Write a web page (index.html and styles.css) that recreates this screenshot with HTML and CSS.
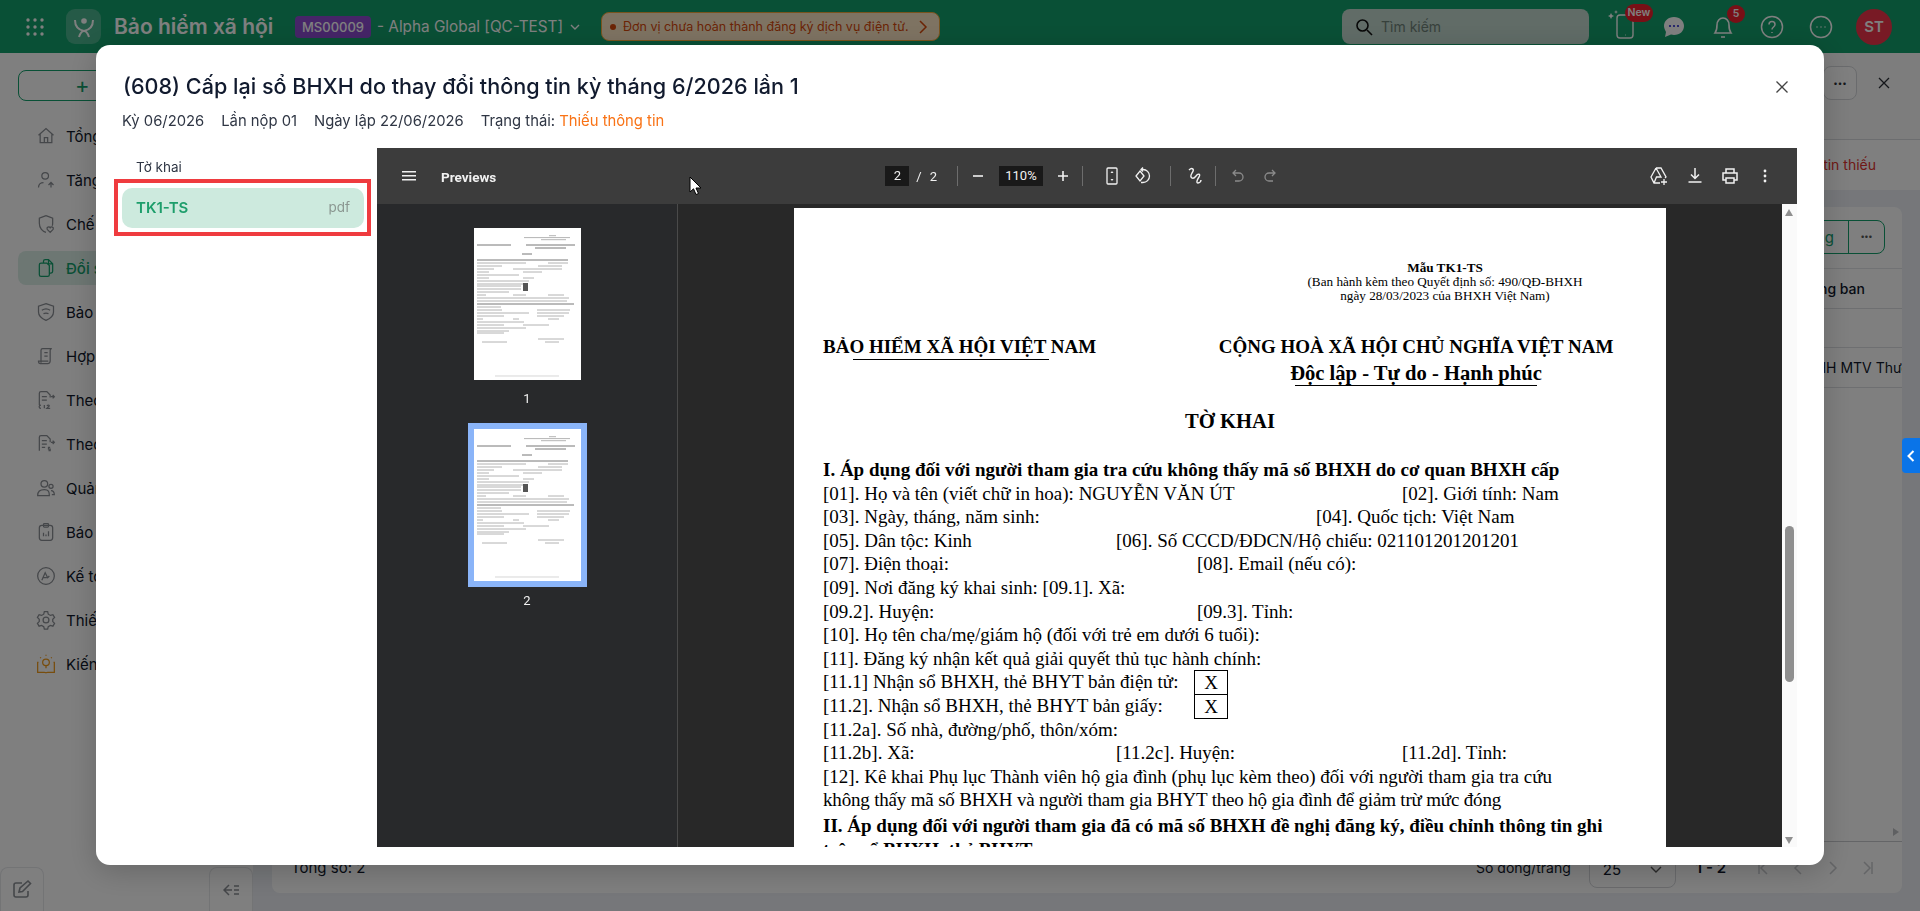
FILE: index.html
```html
<!DOCTYPE html>
<html lang="vi">
<head>
  <meta charset="UTF-8" />
  <meta name="viewport" content="width=device-width, initial-scale=1.0"/>
  <title>Bảo hiểm xã hội</title>
  <link rel="stylesheet" href="styles.css">
</head>
<body>
  <div class="app">
    <header class="topbar">
      <svg class="grid-icon" width="20" height="20" viewBox="0 0 20 20" fill="#fff"><circle cx="3" cy="3" r="1.7"/><circle cx="10" cy="3" r="1.7"/><circle cx="17" cy="3" r="1.7"/><circle cx="3" cy="10" r="1.7"/><circle cx="10" cy="10" r="1.7"/><circle cx="17" cy="10" r="1.7"/><circle cx="3" cy="17" r="1.7"/><circle cx="10" cy="17" r="1.7"/><circle cx="17" cy="17" r="1.7"/></svg>
      <div class="logo">
        <svg width="22" height="24" viewBox="0 0 22 24" fill="none" stroke="#fff" stroke-width="2"><circle cx="11" cy="6" r="2.8" fill="#fff" stroke="none"/><path d="M2 5c0 7 4 10 9 11 5-1 9-4 9-11"/><path d="M6 22c1-3 3-6 5-6s4 3 5 6"/></svg>
      </div>
      <span class="app-name">Bảo hiểm xã hội</span>
      <span class="org-code">MS00009</span>
      <span class="org-name">- Alpha Global [QC-TEST]</span>
      <svg class="org-caret" width="12" height="12" viewBox="0 0 12 12" fill="none" stroke="#fff" stroke-width="1.4"><path d="M2 4l4 4 4-4"/></svg>
      <div class="warn-pill">
        <i class="warn-dot"></i>
        <span>Đơn vị chưa hoàn thành đăng ký dịch vụ điện tử.</span>
        <svg width="10" height="14" viewBox="0 0 10 14" fill="none" stroke="currentColor" stroke-width="1.5"><path d="M2 1l6 6-6 6"/></svg>
      </div>
      <div class="search">
        <svg width="18" height="18" viewBox="0 0 18 18" fill="none" stroke="#111" stroke-width="1.6"><circle cx="7.5" cy="7.5" r="5.5"/><path d="M12 12l5 5"/></svg>
        <span>Tìm kiếm</span>
      </div>
      <div class="top-icons">
        <div class="top-icon phone">
          <svg width="28" height="34" viewBox="0 0 28 34" fill="none" stroke="#fff" stroke-width="1.4"><rect x="9" y="5" width="16" height="23" rx="3"/><path d="M17 25h.5"/><path d="M3 3l1 2 2 1-2 1-1 2-1-2-2-1 2-1z M8 0l.6 1.4L10 2l-1.4.6L8 4l-.6-1.4L6 2l1.4-.6z" fill="#fff" stroke="none"/></svg>
          <span class="badge badge-new">New</span>
        </div>
        <div class="top-icon">
          <svg width="24" height="24" viewBox="0 0 24 24"><path d="M12 2c6 0 10 4 10 9s-4 9-10 9c-1 0-2 0-3-.4L3 22l1-5c-1-2-2-4-2-6 0-5 4-9 10-9z" fill="#fff"/><circle cx="8" cy="11" r="1.1" fill="#2a2ad0"/><circle cx="12" cy="11" r="1.1" fill="#2a2ad0"/><circle cx="16" cy="11" r="1.1" fill="#2a2ad0"/></svg>
        </div>
        <div class="top-icon bell">
          <svg width="24" height="28" viewBox="0 0 24 28" fill="none" stroke="#fff" stroke-width="1.6"><path d="M4 20c1.5-2 2-3 2-8 0-4 2.5-7 6-7s6 3 6 7c0 5 .5 6 2 8z"/><path d="M10 24h4"/></svg>
          <span class="badge badge-count">5</span>
        </div>
        <div class="top-icon">
          <svg width="24" height="24" viewBox="0 0 24 24" fill="none" stroke="#fff" stroke-width="1.5"><circle cx="12" cy="12" r="10.5"/><path d="M9 9.5C9 7.5 10.5 6.5 12 6.5s3 1 3 3c0 2.5-3 2.5-3 5"/><path d="M12 17v1"/></svg>
        </div>
        <div class="top-icon">
          <svg width="24" height="24" viewBox="0 0 24 24" fill="none" stroke="#fff" stroke-width="1.5"><circle cx="12" cy="12" r="10.5"/><path d="M7.5 12h1M11.5 12h1M15.5 12h1"/></svg>
        </div>
        <div class="avatar">ST</div>
      </div>
    </header>

    <div class="app-body">
      <aside class="sidebar">
        <div class="new-btn">+</div>
        <nav class="side-nav">
          <a><svg viewBox="0 0 24 24"><path d="M3 11l9-8 9 8M5 10v10h14V10M10 20v-6h4v6"/></svg>Tổng quan</a>
          <a><svg viewBox="0 0 24 24"><circle cx="11" cy="7" r="4"/><path d="M3 21c0-4 3-6 6-6M18 21v-6M15 18l3-3 3 3"/></svg>Tăng giảm</a>
          <a><svg viewBox="0 0 24 24"><path d="M12 2l8 3v6c0 1 0 2-.5 3M12 22c-4-1-8-5-8-11V5l8-3"/><path d="M17 22l-3.5-3.5a2 2 0 0 1 3.5-2 2 2 0 0 1 3.5 2z"/></svg>Chế độ</a>
          <a class="active"><svg viewBox="0 0 24 24"><path d="M9 6V4a2 2 0 0 1 2-2h4l5 5v9a2 2 0 0 1-2 2h-2M15 2v5h5"/><path d="M4 8a2 2 0 0 1 2-2h7l3 3v11a2 2 0 0 1-2 2H6a2 2 0 0 1-2-2z"/></svg>Đổi sổ thẻ</a>
          <a><svg viewBox="0 0 24 24"><path d="M12 2l9 3v7c0 5-4 8-9 10-5-2-9-5-9-10V5z"/><path d="M7 10c3-2 7-2 10 0M9 14c2-1 4-1 6 0"/></svg>Bảo hiểm</a>
          <a><svg viewBox="0 0 24 24"><path d="M6 20V5a2 2 0 0 1 2-2h11a2 2 0 0 0-2 2v13a3 3 0 0 1-3 3H5a2 2 0 0 1-2-2v-1h11v1M10 8h4M10 12h4"/></svg>Hợp đồng</a>
          <a><svg viewBox="0 0 24 24"><path d="M4 18V4a2 2 0 0 1 2-2h7l4 4v3M7 8h6M7 12h6M18 8h4M20 6l2 2-2 2"/><path d="M6 22c-3 0-3-4 0-4M10 18v4M13 19c2-2 4 0 2 1l-2 2h4"/></svg>Theo dõi C12</a>
          <a><svg viewBox="0 0 24 24"><path d="M4 20V4a2 2 0 0 1 2-2h7l4 4v4M7 8h6M7 12h6M7 16h4M18 10h4M20 8l2 2-2 2M17 16h-2v2h2v2h-2"/></svg>Theo dõi S</a>
          <a><svg viewBox="0 0 24 24"><circle cx="10" cy="7" r="4"/><circle cx="18" cy="10" r="2.5"/><path d="M2 21c0-5 3-7 8-7s6 2 6 7zM18 15c3 0 4 2 4 5h-3"/></svg>Quản lý</a>
          <a><svg viewBox="0 0 24 24"><rect x="4" y="4" width="16" height="18" rx="3"/><rect x="9" y="2" width="6" height="4" rx="1"/><path d="M9 17v-4M12 17v-2M15 17v-6"/></svg>Báo cáo</a>
          <a><svg viewBox="0 0 24 24"><circle cx="12" cy="12" r="10"/><path d="M7 17l4-9 3 6 2-2M9 14h4"/></svg>Kế toán</a>
          <a><svg viewBox="0 0 24 24"><circle cx="12" cy="12" r="3.5"/><path d="M10 2h4l.7 3 2.6 1.5 3-.9 2 3.4-2.2 2.1v2.800l2.200 2.100-2 3.400-3-.9-2.600 1.500-.7 3h-4l-.7-3-2.600-1.500-3 .9-2-3.400 2.200-2.100v-2.800L1.700 9l2-3.400 3 .9L9.300 5z"/></svg>Thiết lập</a>
          <a class="gold"><svg viewBox="0 0 24 24"><path d="M3 10H2v12h8c1 0 2 .5 2 .5s1-.5 2-.5h8V10h-1"/><circle cx="12" cy="10" r="4"/><path d="M12 14v3M12 1v1M5 4l1 1M19 4l-1 1"/></svg>Kiến thức</a>
        </nav>
        <div class="side-foot">
          <div class="foot-box foot-edit">
            <svg width="20" height="20" viewBox="0 0 20 20" fill="none" stroke="#8a8e94" stroke-width="1.6"><path d="M10 4H4a2 2 0 0 0-2 2v10a2 2 0 0 0 2 2h10a2 2 0 0 0 2-2v-4"/><path d="M7 13l1-4 8-7 2.500 2.500-8 8z"/></svg>
          </div>
          <div class="foot-box foot-collapse">
            <svg width="16" height="12" viewBox="0 0 16 12" fill="none" stroke="#8a8e94" stroke-width="1.5"><path d="M6 1L1 6l5 5M1 6h8M11 2h5M11 6h5M11 10h5"/></svg>
          </div>
        </div>
      </aside>

      <main class="main">
        <div class="page-head">
          <div class="more-btn">•••</div>
          <svg class="page-close" width="12" height="12" viewBox="0 0 12 12" stroke="#2b2f36" stroke-width="1.3"><path d="M1 1l10 10M11 1L1 11"/></svg>
        </div>
        <div class="notice-strip">Thông tin thiếu</div>
        <section class="list-card">
          <div class="list-tools">
            <div class="split-btn"><span>Cập nhật hàng</span><b>•••</b></div>
          </div>
          <div class="list-row row-head">Phòng ban</div>
          <div class="list-row"></div>
          <div class="list-row row-company"><span>Công ty TNHH MTV Thương mại</span></div>
          <div class="list-fill"><i class="arrow-right"></i></div>
          <div class="list-foot">
            <span class="total">Tổng số: 2</span>
            <span class="per-page">Số dòng/trang</span>
            <div class="page-size"><span>25</span><svg width="12" height="8" viewBox="0 0 12 8" fill="none" stroke="#555" stroke-width="1.4"><path d="M1 1l5 5 5-5"/></svg></div>
            <span class="range">1 - 2</span>
            <div class="pager">
              <svg viewBox="0 0 12 14"><path d="M2 1v12M10 1L4 7l6 6"/></svg>
              <svg viewBox="0 0 12 14"><path d="M9 1L3 7l6 6"/></svg>
              <svg viewBox="0 0 12 14"><path d="M3 1l6 6-6 6"/></svg>
              <svg viewBox="0 0 12 14"><path d="M10 1v12M2 1l6 6-6 6"/></svg>
            </div>
          </div>
        </section>
      </main>
    </div>
  </div>

  <div class="backdrop">
    <section class="modal">
      <header class="modal-head">
        <h1>(608) Cấp lại sổ BHXH do thay đổi thông tin kỳ tháng 6/2026 lần 1</h1>
        <svg class="modal-close" width="12" height="12" viewBox="0 0 12 12" stroke="#444" stroke-width="1.3"><path d="M.5.5l11 11M11.5.5l-11 11"/></svg>
        <p class="modal-meta">
          <span>Kỳ 06/2026</span>
          <span>Lần nộp 01</span>
          <span>Ngày lập 22/06/2026</span>
          <span>Trạng thái: <em>Thiếu thông tin</em></span>
        </p>
      </header>

      <div class="modal-body">
        <div class="file-list">
          <h3>Tờ khai</h3>
          <div class="file-frame">
            <div class="file-item"><strong>TK1-TS</strong><span>pdf</span></div>
          </div>
        </div>

        <div class="viewer">
          <div class="viewer-bar">
            <svg class="vb-menu" width="14" height="10" viewBox="0 0 14 10" fill="#f1f1f1"><rect width="14" height="1.5"/><rect y="4" width="14" height="1.5"/><rect y="8" width="14" height="1.5"/></svg>
            <span class="vb-title">Previews</span>
            <div class="vb-center">
              <span class="vb-field vb-page">2</span>
              <span class="vb-slash">/</span>
              <span class="vb-count">2</span>
              <i class="vb-sep sep-a"></i>
              <svg class="vb-ic ic-minus" viewBox="0 0 14 14" stroke="#f1f1f1" stroke-width="1.6"><path d="M2 7h10"/></svg>
              <span class="vb-field vb-zoom">110%</span>
              <svg class="vb-ic ic-plus" viewBox="0 0 14 14" stroke="#f1f1f1" stroke-width="1.6"><path d="M2 7h10M7 2v10"/></svg>
              <i class="vb-sep sep-b"></i>
              <svg class="vb-ic ic-fit" viewBox="0 0 14 20" fill="none" stroke="#f1f1f1" stroke-width="1.3"><rect x="2" y="2" width="10" height="16" rx="1"/><path d="M7 5l-1.5 2h3zM7 15l-1.5-2h3z" fill="#f1f1f1" stroke="none"/></svg>
              <svg class="vb-ic ic-rotate" viewBox="0 0 20 20" fill="none" stroke="#f1f1f1" stroke-width="1.3"><path d="M7 5l4 5-4 5-4-5z"/><path d="M10 1.5l-2 2 2 2M8 3.5h2a6.5 6.5 0 0 1 0 13H8"/></svg>
              <i class="vb-sep sep-c"></i>
              <svg class="vb-ic ic-draw" viewBox="0 0 18 20" fill="none" stroke="#f1f1f1" stroke-width="1.4"><path d="M3 4c3-3 6-1 3 3-3 5 1 7 4 3 2-3 5-2 3 1s-3 6-1 6 3-2 3-3"/></svg>
              <i class="vb-sep sep-d"></i>
              <svg class="vb-ic ic-undo" viewBox="0 0 16 16" fill="none" stroke="#8a8a8a" stroke-width="1.3"><path d="M6 2L3 5l3 3M3 5h6a4 4 0 0 1 0 8H5"/></svg>
              <svg class="vb-ic ic-redo" viewBox="0 0 16 16" fill="none" stroke="#8a8a8a" stroke-width="1.3"><path d="M10 2l3 3-3 3M13 5H7a4 4 0 0 0 0 8h4"/></svg>
            </div>
            <div class="vb-right">
              <svg width="20" height="20" viewBox="0 0 20 20" fill="none" stroke="#f1f1f1" stroke-width="1.3"><path d="M7 2h5l5 9-1 1M7 2L2 11l3 6h6M7 2l5 9H7.5L5 17"/><path d="M15 13v6M12 16h6"/></svg>
              <svg width="16" height="18" viewBox="0 0 16 18" fill="none" stroke="#f1f1f1" stroke-width="1.5"><path d="M8 1v10M4 7.5L8 11.5l4-4M1.5 15h13"/></svg>
              <svg width="18" height="18" viewBox="0 0 18 18" fill="none" stroke="#f1f1f1" stroke-width="1.5"><path d="M5 6V2h8v4M5 13H2V6h14v7h-3"/><rect x="5" y="11" width="8" height="5"/></svg>
              <svg class="vb-kebab" width="4" height="14" viewBox="0 0 4 14" fill="#f1f1f1"><circle cx="2" cy="2" r="1.4"/><circle cx="2" cy="7" r="1.4"/><circle cx="2" cy="12" r="1.4"/></svg>
            </div>
          </div>

          <div class="viewer-main">
            <div class="thumbs">
              <div class="thumb">
                <svg class="thumb-page" viewBox="0 0 107 152">
                  <g id="tp">
                    <path stroke="#a0a0a0" stroke-width=".8" d="M75 7.7h7M50 9.6h46M67 11.7h25M3 35h49M74 35h20M3 38h25M64 38h24M3 41h17M39 41h49M3 44h12M49 44h19M3 47h42M3 50h12M49 50h11M3 53h52M3 56h46M3 58h44M3 61h44M3 64h32M3 67h9M39 67h13M74 67h16M3 70h92M3 73h90M3 79h24M3 82h25M63 82h33M3 85h52M63 85h32M3 88h27M63 88h27M3 91h6M39 91h6M74 91h11M3 94h47M3 97h27M49 97h26M3 100h49M3 103h32M3 105h27M64 111h26M8 114h25M71 114h14"/>
                    <path stroke="#666" stroke-width=".9" d="M3 17h34M52 17h49M61 20h31M48 26h10M3 32h91M3 76h97"/>
                    <path stroke="#c4c4c4" stroke-width=".7" d="M21 148h64"/>
                    <rect x="49" y="55" width="5" height="8" fill="#555"/>
                  </g>
                </svg>
              </div>
              <span class="thumb-no">1</span>
              <div class="thumb thumb-on">
                <svg class="thumb-page" viewBox="0 0 107 152"><use href="#tp"/></svg>
              </div>
              <span class="thumb-no">2</span>
            </div>

            <div class="doc-area">
              <article class="doc-page">
                <div class="form-note">
                  <b>Mẫu TK1-TS</b>
                  <span>(Ban hành kèm theo Quyết định số: 490/QĐ-BHXH</span>
                  <span>ngày 28/03/2023 của BHXH Việt Nam)</span>
                </div>
                <div class="doc-head">
                  <div class="agency">BẢO HIỂM XÃ HỘI VIỆT NAM</div>
                  <div class="nation">
                    <div>CỘNG HOÀ XÃ HỘI CHỦ NGHĨA VIỆT NAM</div>
                    <div class="motto">Độc lập - Tự do - Hạnh phúc</div>
                  </div>
                </div>
                <h2 class="doc-title">TỜ KHAI</h2>
                <div class="ln"><b>I. Áp dụng đối với người tham gia tra cứu không thấy mã số BHXH do cơ quan BHXH cấp</b></div>
                <div class="ln"><span>[01]. Họ và tên (viết chữ in hoa): NGUYỄN VĂN ÚT</span><span class="at-e">[02]. Giới tính: Nam</span></div>
                <div class="ln"><span>[03]. Ngày, tháng, năm sinh:</span><span class="at-d">[04]. Quốc tịch: Việt Nam</span></div>
                <div class="ln"><span>[05]. Dân tộc: Kinh</span><span class="at-b">[06]. Số CCCD/ĐDCN/Hộ chiếu: 021101201201201</span></div>
                <div class="ln"><span>[07]. Điện thoại:</span><span class="at-c">[08]. Email (nếu có):</span></div>
                <div class="ln"><span>[09]. Nơi đăng ký khai sinh: [09.1]. Xã:</span></div>
                <div class="ln"><span>[09.2]. Huyện:</span><span class="at-c">[09.3]. Tỉnh:</span></div>
                <div class="ln"><span>[10]. Họ tên cha/mẹ/giám hộ (đối với trẻ em dưới 6 tuổi):</span></div>
                <div class="ln"><span>[11]. Đăng ký nhận kết quả giải quyết thủ tục hành chính:</span></div>
                <div class="ln"><span>[11.1] Nhận sổ BHXH, thẻ BHYT bản điện tử:</span><span class="at-c tick">X</span></div>
                <div class="ln"><span>[11.2]. Nhận sổ BHXH, thẻ BHYT bản giấy:</span><span class="at-c tick">X</span></div>
                <div class="ln"><span>[11.2a]. Số nhà, đường/phố, thôn/xóm:</span></div>
                <div class="ln"><span>[11.2b]. Xã:</span><span class="at-b">[11.2c]. Huyện:</span><span class="at-e">[11.2d]. Tỉnh:</span></div>
                <div class="ln"><span>[12]. Kê khai Phụ lục Thành viên hộ gia đình (phụ lục kèm theo) đối với người tham gia tra cứu</span></div>
                <div class="ln tight"><span>không thấy mã số BHXH và người tham gia BHYT theo hộ gia đình để giảm trừ mức đóng</span></div>
                <div class="ln section-two"><b>II. Áp dụng đối với người tham gia đã có mã số BHXH đề nghị đăng ký, điều chỉnh thông tin ghi</b></div>
                <div class="ln"><b>trên sổ BHXH, thẻ BHYT</b></div>
              </article>
            </div>

            <div class="v-scroll">
              <i class="arrow-up"></i>
              <i class="v-thumb"></i>
              <i class="arrow-down"></i>
            </div>
          </div>
        </div>
      </div>
    </section>
  </div>

  <div class="side-tab">
    <svg width="8" height="12" viewBox="0 0 8 12" fill="none" stroke="#fff" stroke-width="2"><path d="M6.5 1L1.5 6l5 5"/></svg>
  </div>
  <svg class="cursor" width="13" height="20" viewBox="0 0 13 20"><path d="M1 1v15l3.5-3.2L7 18.500l2.500-1-2.500-5.500h5z" fill="#fff" stroke="#000"/></svg>
</body>
</html>
```

FILE: styles.css
```css
* {
  box-sizing: border-box;
}

body {
  margin: 0;
  font-family: Inter, 'Noto Sans', sans-serif;
  color: #0f172a;
  overflow: hidden;
}

.app {
  display: flex;
  flex-direction: column;
  height: 100vh;
  background: #eceff4;
}

/* top bar */
.topbar {
  height: 53px;
  flex-shrink: 0;
  display: flex;
  align-items: center;
  background: #13a06c;
  color: #fff;
  padding-left: 25px;
}

.logo {
  flex: 0 0 35px;
  height: 35px;
  margin-left: 21px;
  display: flex;
  align-items: center;
  justify-content: center;
  background: #4ab58e;
  border-radius: 9px;
}

.app-name {
  margin-left: 13px;
  font-size: 21px;
  font-weight: 600;
  width: 181px;
  white-space: nowrap;
}

.org-code {
  background: #8c4bd0;
  padding: 3px 6px;
  border-radius: 4px;
  font-size: 13px;
  font-weight: 500;
  width: 76px;
  text-align: center;
}

.org-name {
  margin-left: 6px;
  font-size: 15.3px;
  width: 191px;
  white-space: nowrap;
}

.org-caret {
  margin-left: 1px;
}

.warn-pill {
  margin-left: 20px;
  width: 339px;
  height: 29px;
  display: flex;
  align-items: center;
  gap: 5px;
  padding: 0 8px;
  font-size: 12.5px;
  color: #d6480a;
  background: #fde7c5;
  border: 1px solid #f2a83b;
  border-radius: 8px;
  white-space: nowrap;
}

.warn-pill svg {
  margin-left: 4px;
}

.warn-dot {
  width: 6px;
  height: 6px;
  margin-right: 2px;
  border-radius: 50%;
  background: #d6480a;
}

.search {
  margin-left: 402px;
  width: 247px;
  height: 35px;
  display: flex;
  align-items: center;
  gap: 8px;
  padding-left: 13px;
  background: #c2d9cf;
  border-radius: 8px;
  font-size: 14px;
  color: #6f8278;
}

.top-icons {
  margin-left: 13px;
  display: flex;
  align-items: center;
}

.top-icon {
  position: relative;
  width: 49px;
  display: flex;
  justify-content: center;
}

.phone {
  margin-left: -4px;
  margin-right: 3px;
  width: 48px;
}

.badge {
  position: absolute;
  background: #f01f2d;
  color: #fff;
  font-weight: 600;
  border-radius: 9px;
  text-align: center;
}

.badge-new {
  top: -6px;
  left: 27px;
  width: 28px;
  height: 18px;
  font-size: 10.5px;
  line-height: 18px;
}

.badge-count {
  top: -8px;
  left: 29px;
  width: 18px;
  height: 18px;
  font-size: 10.5px;
  line-height: 18px;
}

.avatar {
  width: 36px;
  height: 36px;
  margin-left: 11px;
  border-radius: 50%;
  background: #f0354a;
  color: #fff;
  font-weight: 600;
  font-size: 15px;
  line-height: 36px;
  text-align: center;
}

/* left menu */
.app-body {
  flex: 1;
  display: flex;
  min-height: 0;
}

.sidebar {
  width: 253px;
  flex-shrink: 0;
  background: #fff;
  display: flex;
  flex-direction: column;
  padding-top: 17px;
}

.new-btn {
  margin-left: 18px;
  width: 217px;
  height: 31px;
  padding-left: 56px;
  border: 1px solid #13a06c;
  border-radius: 8px;
  color: #13a06c;
  font-size: 22px;
  line-height: 28px;
}

.side-nav {
  margin-top: 18px;
  display: flex;
  flex-direction: column;
  gap: 10px;
}

.side-nav a {
  height: 34px;
  margin: 0 18px;
  padding-left: 18px;
  border-radius: 8px;
  display: flex;
  align-items: center;
  gap: 10px;
  font-size: 15px;
}

.side-nav svg {
  width: 20px;
  height: 20px;
  fill: none;
  stroke: #8a8e94;
  stroke-width: 1.5;
}

.side-nav a.active {
  background: #dbeee7;
  color: #13a06c;
  font-weight: 500;
}

.side-nav a.active svg {
  stroke: #13a06c;
}

.side-nav a.gold svg {
  stroke: #f09a1a;
}

.side-foot {
  margin-top: auto;
  height: 44px;
  display: flex;
  justify-content: space-between;
}

.foot-box {
  border: 1px solid #e6e8eb;
  border-bottom: 0;
  border-radius: 8px 8px 0 0;
  background: #fff;
  display: flex;
  align-items: center;
  justify-content: center;
}

.foot-edit {
  width: 44px;
  padding-bottom: 2px;
}

.foot-collapse {
  width: 44px;
}

/* page behind the dialog */
.main {
  flex: 1;
  min-width: 0;
  display: flex;
  flex-direction: column;
}

.page-head {
  height: 87px;
  flex-shrink: 0;
  background: #fafafa;
  border-bottom: 1px solid #d8dade;
  display: flex;
  align-items: flex-start;
  justify-content: flex-end;
  padding: 13px 30px 0 0;
  gap: 21px;
}

.more-btn {
  width: 34px;
  height: 34px;
  background: #fff;
  border: 1px solid #d5d7db;
  border-radius: 8px;
  font-size: 8px;
  line-height: 32px;
  text-align: center;
  color: #2b2f36;
}

.page-close {
  margin-top: 11px;
}

.notice-strip {
  height: 50px;
  flex-shrink: 0;
  background: #fff;
  color: #e0312d;
  font-size: 14px;
  line-height: 50px;
  text-align: right;
  padding-right: 44px;
}

.list-card {
  flex: 1;
  margin: 17px 18px 18px 19px;
  min-height: 0;
  background: #fff;
  border-radius: 8px;
  display: flex;
  flex-direction: column;
  overflow: hidden;
}

.list-tools {
  height: 62px;
  flex-shrink: 0;
  border-bottom: 1px solid #e3e5e8;
  display: flex;
  justify-content: flex-end;
  align-items: flex-start;
  padding: 13px 17px 0 0;
}

.split-btn {
  height: 34px;
  display: flex;
  align-items: center;
  border: 1px solid #13a06c;
  border-radius: 8px;
  color: #13a06c;
  font-size: 15px;
}

.split-btn span {
  padding: 0 14px;
}

.split-btn b {
  width: 36px;
  height: 100%;
  border-left: 1px solid #13a06c;
  color: #555;
  font-size: 8px;
  line-height: 30px;
  text-align: center;
}

.list-row {
  height: 39.5px;
  flex-shrink: 0;
  border-bottom: 1px solid #dcdee2;
  font-size: 14px;
  line-height: 39px;
  white-space: nowrap;
}

.row-head {
  font-weight: 500;
  text-align: right;
  padding-right: 37px;
}

.row-company {
  padding-left: 1468px;
  overflow: hidden;
}

.list-fill {
  flex: 1;
  border-bottom: 1px solid #c9cbcf;
  position: relative;
}

.arrow-right {
  position: absolute;
  right: 3px;
  bottom: 5px;
  border-left: 6px solid #bfc1c4;
  border-top: 4px solid transparent;
  border-bottom: 4px solid transparent;
}

.list-foot {
  height: 51px;
  flex-shrink: 0;
  display: flex;
  align-items: center;
  padding-left: 19px;
  font-size: 15px;
}

.per-page {
  margin-left: auto;
  font-size: 14px;
}

.page-size {
  margin-left: 18px;
  width: 87px;
  height: 36px;
  margin-top: 4px;
  display: flex;
  align-items: center;
  justify-content: space-between;
  padding: 0 13px;
  border: 1px solid #d5d7db;
  border-radius: 8px;
}

.range {
  margin-left: 20px;
  font-weight: 600;
}

.pager {
  margin-left: 31px;
  margin-right: 28px;
  display: flex;
  gap: 23px;
}

.pager svg {
  width: 12px;
  height: 14px;
  fill: none;
  stroke: #c9cbcf;
  stroke-width: 1.5;
}

/* dialog */
.backdrop {
  position: fixed;
  inset: 0;
  background: rgba(0, 0, 0, .5);
  padding: 45px 96px 46px;
  display: flex;
}

.modal {
  flex: 1;
  display: flex;
  flex-direction: column;
  background: #fff;
  border-radius: 14px;
  box-shadow: 0 6px 30px rgba(0, 0, 0, .2);
  padding: 0 27px 18px 18px;
}

.modal-head {
  height: 103px;
  flex-shrink: 0;
  padding: 26px 0 0 9px;
  position: relative;
}

.modal-head h1 {
  margin: 0;
  font-size: 21.6px;
  line-height: 30px;
  font-weight: 500;
  color: #111a2e;
}

.modal-close {
  position: absolute;
  right: 9px;
  top: 36px;
}

.modal-meta {
  margin: 10px 0 0 -1px;
  display: flex;
  gap: 17px;
  font-size: 14.8px;
  line-height: 20px;
  color: #2f3644;
}

.modal-meta em {
  font-style: normal;
  color: #f97316;
}

.modal-body {
  flex: 1;
  display: flex;
  gap: 6px;
  min-height: 0;
}

.file-list {
  width: 257px;
  flex-shrink: 0;
}

.file-list h3 {
  margin: 10px 0 0 22px;
  height: 21px;
  font-size: 13.5px;
  line-height: 18px;
  font-weight: 400;
  color: #2f3644;
}

.file-frame {
  height: 57px;
  border: 4px solid #ef3b3f;
  padding: 5px 3px 4px 4px;
}

.file-item {
  height: 40px;
  background: #cdeade;
  border-radius: 10px;
  display: flex;
  align-items: center;
  justify-content: space-between;
  padding: 0 14px 2px 14px;
}

.file-item strong {
  font-size: 15px;
  font-weight: 600;
  color: #1d9e6b;
}

.file-item span {
  font-size: 13.5px;
  color: #8b9791;
}

/* pdf viewer */
.viewer {
  flex: 1;
  min-width: 0;
  display: flex;
  flex-direction: column;
}

.viewer-bar {
  height: 56px;
  flex-shrink: 0;
  background: #3c3c3c;
  color: #f1f1f1;
  display: flex;
  align-items: center;
  position: relative;
}

.vb-menu {
  margin-left: 25px;
}

.vb-title {
  margin-left: 25px;
  padding-top: 2px;
  font-family: Roboto, sans-serif;
  font-weight: 700;
  font-size: 13.5px;
}

.vb-center {
  display: flex;
  align-items: center;
  margin-left: 389px;
  font-family: Roboto, sans-serif;
  font-size: 13px;
}

.vb-field {
  background: #191919;
  height: 20px;
  line-height: 20px;
  text-align: center;
}

.vb-page {
  width: 24px;
}

.vb-slash {
  margin-left: 7px;
}

.vb-count {
  margin-left: 8px;
}

.vb-sep {
  width: 1px;
  height: 20px;
  background: #6d6d6d;
}

.sep-a {
  margin-left: 20px;
}

.vb-ic {
  width: 14px;
  height: 14px;
  flex-shrink: 0;
}

.ic-minus {
  margin-left: 13px;
}

.vb-zoom {
  margin-left: 14px;
  width: 44px;
}

.ic-plus {
  margin-left: 13px;
}

.sep-b {
  margin-left: 12px;
}

.ic-fit {
  margin-left: 22px;
  width: 14px;
  height: 20px;
}

.ic-rotate {
  margin-left: 14px;
  width: 20px;
  height: 20px;
}

.sep-c {
  margin-left: 17px;
}

.ic-draw {
  margin-left: 15px;
  width: 18px;
  height: 20px;
}

.sep-d {
  margin-left: 11px;
}

.ic-undo {
  margin-left: 14px;
  width: 16px;
  height: 16px;
}

.ic-redo {
  margin-left: 16px;
  width: 16px;
  height: 16px;
}

.vb-right {
  margin-left: auto;
  margin-right: 30px;
  display: flex;
  align-items: center;
  gap: 18px;
}

.vb-kebab {
  margin-left: 6px;
}

.viewer-main {
  flex: 1;
  min-height: 0;
  display: flex;
  background: #282828;
}

.thumbs {
  width: 301px;
  flex-shrink: 0;
  background: #28292b;
  border-right: 1px solid #4a4a4a;
  display: flex;
  flex-direction: column;
  align-items: center;
  padding-top: 24px;
}

.thumb {
  width: 107px;
  height: 152px;
  background: #fff;
  flex-shrink: 0;
}

.thumb-on {
  width: 119px;
  height: 164px;
  border: 6px solid #8ab4f8;
}

.thumb-on + .thumb-no {
  margin-top: 6px;
}

.thumb-page {
  display: block;
  width: 107px;
  height: 152px;
}

.thumb-no {
  color: #f1f1f1;
  font-family: Roboto, sans-serif;
  font-size: 13px;
  line-height: 16px;
  margin: 11px 0 16px;
}

.doc-area {
  flex: 1;
  min-width: 0;
  overflow: hidden;
  padding: 4px 0 0 116px;
}

.doc-page {
  width: 872px;
  min-height: 1200px;
  background: #fff;
  padding: 53px 0 0 29px;
  font-family: 'Liberation Serif', serif;
  font-size: 19px;
  color: #000;
}

.form-note {
  width: 442px;
  margin-left: auto;
  display: flex;
  flex-direction: column;
  align-items: center;
  font-size: 13.2px;
  line-height: 14px;
}

.doc-head {
  margin-top: 31px;
  display: grid;
  grid-template-columns: 373px 440px;
  font-weight: bold;
  line-height: 26px;
}

.agency {
  position: relative;
  white-space: nowrap;
}

.agency::after {
  content: "";
  position: absolute;
  left: 30px;
  top: 25px;
  width: 196px;
  height: 1px;
  background: #000;
}

.nation {
  text-align: center;
  white-space: nowrap;
}

.motto {
  position: relative;
  font-size: 20.6px;
}

.motto::after {
  content: "";
  position: absolute;
  left: 99px;
  top: 25px;
  width: 242px;
  height: 1px;
  background: #000;
}

.doc-title {
  margin: 22px 0 24px;
  padding-right: 29px;
  font-size: 20.6px;
  line-height: 26px;
  text-align: center;
}

/* rows of the form keep their column stops on a shared grid */
.ln {
  display: grid;
  grid-template-columns: 293px 81px 119px 86px 1fr;
  height: 23.6px;
  line-height: 23.6px;
  white-space: nowrap;
}

.ln > * {
  grid-row: 1;
}

.tight {
  letter-spacing: -.18px;
}

.section-two {
  margin-top: 2px;
}

.at-b {
  grid-column: 2 / -1;
}

.at-c {
  grid-column: 3 / -1;
}

.at-d {
  grid-column: 4 / -1;
}

.at-e {
  grid-column: 5 / -1;
}

.tick {
  width: 34px;
  height: 25px;
  margin-left: -3px;
  border: 1px solid #000;
  text-align: center;
  line-height: 23px;
}

.v-scroll {
  width: 15px;
  flex-shrink: 0;
  background: #fafafa;
  position: relative;
}

.v-thumb {
  position: absolute;
  left: 3px;
  top: 322px;
  width: 9px;
  height: 156px;
  background: #8f8f8f;
  border-radius: 5px;
}

.arrow-up,
.arrow-down {
  position: absolute;
  left: 3px;
  border-left: 4.5px solid transparent;
  border-right: 4.5px solid transparent;
}

.arrow-up {
  top: 5px;
  border-bottom: 7px solid #8f8f8f;
}

.arrow-down {
  bottom: 3px;
  border-top: 7px solid #8f8f8f;
}

/* things above the overlay */
.side-tab {
  position: fixed;
  right: 0;
  top: 438px;
  width: 18px;
  height: 35px;
  display: flex;
  align-items: center;
  justify-content: center;
  background: #0a74e8;
  border-radius: 4px 0 0 4px;
}

.cursor {
  position: fixed;
  left: 689px;
  top: 176px;
}
```
